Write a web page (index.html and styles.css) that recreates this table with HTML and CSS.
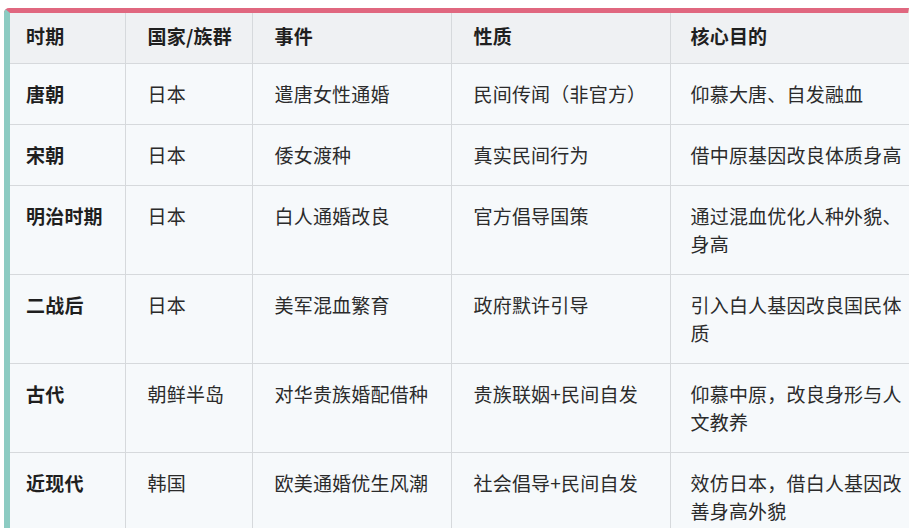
FILE: index.html
```html
<!DOCTYPE html>
<html lang="zh-CN">
<head>
<meta charset="utf-8">
<title>表格</title>
<link rel="stylesheet" href="styles.css">
</head>
<body>
<div class="frame">
  <table class="grid">
    <colgroup>
      <col class="c1"><col class="c2"><col class="c3"><col class="c4"><col class="c5">
    </colgroup>
    <thead>
      <tr><th>时期</th><th>国家/族群</th><th>事件</th><th>性质</th><th>核心目的</th></tr>
    </thead>
    <tbody>
      <tr><td>唐朝</td><td>日本</td><td>遣唐女性通婚</td><td>民间传闻（非官方）</td><td>仰慕大唐、自发融血</td></tr>
      <tr><td>宋朝</td><td>日本</td><td>倭女渡种</td><td>真实民间行为</td><td>借中原基因改良体质身高</td></tr>
      <tr><td>明治时期</td><td>日本</td><td>白人通婚改良</td><td>官方倡导国策</td><td>通过混血优化人种外貌、身高</td></tr>
      <tr><td>二战后</td><td>日本</td><td>美军混血繁育</td><td>政府默许引导</td><td>引入白人基因改良国民体质</td></tr>
      <tr><td>古代</td><td>朝鲜半岛</td><td>对华贵族婚配借种</td><td>贵族联姻+民间自发</td><td>仰慕中原，改良身形与人文教养</td></tr>
      <tr><td>近现代</td><td>韩国</td><td>欧美通婚优生风潮</td><td>社会倡导+民间自发</td><td>效仿日本，借白人基因改善身高外貌</td></tr>
    </tbody>
  </table>
</div>
</body>
</html>
```
FILE: styles.css
```css
html, body {
  margin: 0;
  padding: 0;
  background: #ffffff;
}
body {
  font-family: "Noto Sans CJK SC", "Noto Sans", sans-serif;
  color: #2b2b2b;
  overflow: hidden;
}
.frame {
  margin: 8px 2px 0 4px;
  border-top: 5px solid #e0677f;
  border-left: 6px solid #8ccbc2;
  border-right: 1px solid #e6dfcf;
  border-top-left-radius: 5px;
  background: #f5f8fa;
}
.grid {
  width: 100%;
  table-layout: fixed;
  border-collapse: collapse;
  font-size: 19px;
  letter-spacing: 0.2px;
}
.c1 { width: 115px; }
.c2 { width: 127px; }
.c3 { width: 199px; }
.c4 { width: 219px; }
.c5 { width: 239px; }
.grid th, .grid td {
  text-align: left;
  vertical-align: top;
  line-height: 28px;
  padding: 16px 4px 16px 22px;
  border: 1px solid #d6d9dc;
}
.grid tr > :first-child {
  border-left: none;
  padding-left: 16px;
  font-weight: 700;
  color: #1f1f1f;
}
.grid tr > :last-child {
  border-right: none;
  padding-left: 20px;
}
.grid thead tr > * {
  border-top: none;
}
.grid th {
  background: #eff1f3;
  font-weight: 700;
  color: #1f1f1f;
  padding-top: 9px;
  padding-bottom: 13px;
}
.grid td {
  background: #f6f9fb;
  font-weight: 400;
}
```
